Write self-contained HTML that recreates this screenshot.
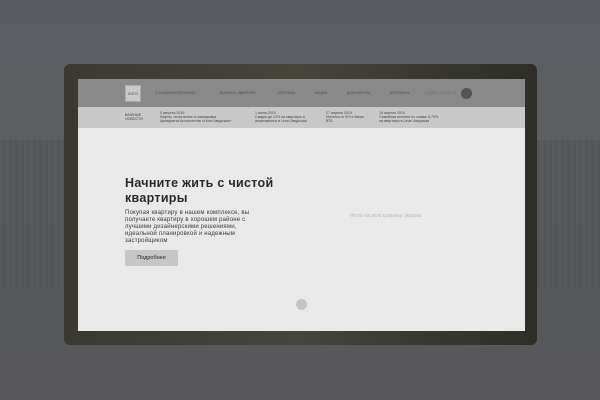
<!DOCTYPE html><html><head><meta charset="utf-8"><style>
*{margin:0;padding:0;box-sizing:border-box}
body{width:600px;height:400px;overflow:hidden;font-family:"Liberation Sans","DejaVu Sans",sans-serif;position:relative;
background:linear-gradient(180deg,#5a5d62 0%,#5d5f62 40%,#56585a 70%,#58585a 100%)}
.bld{position:absolute;left:0;top:140px;width:600px;height:150px;background:repeating-linear-gradient(90deg,#57595b 0 3px,#525456 3px 6px);opacity:.8}
.ground{position:absolute;left:0;top:365px;width:600px;height:35px;background:#58585a}
.frame{position:absolute;left:64px;top:64px;width:473px;height:281px;border-radius:6px;background:linear-gradient(90deg,#3a3a32,#45453c 50%,#2e2d28)}
.scr{position:absolute;left:78px;top:79px;width:447px;height:252px;background:#e9e9e9;overflow:hidden}
.nav{position:absolute;left:0;top:0;width:100%;height:28px;background:#898989}
.news{position:absolute;left:0;top:28px;width:100%;height:21px;background:#c8c8c8}
.t{position:absolute;font-size:3.6px;color:#444;white-space:nowrap;line-height:4.2px}
.n{color:#505050;top:12px}
</style></head><body>
<div class="bld"></div><div class="ground"></div>
<div class="frame"></div>
<div class="scr">
<div class="nav">
<div style="position:absolute;left:47px;top:6px;width:16px;height:17px;background:#c8c8c8;border:1px solid #aaa"></div>
<div class="t" style="left:50px;top:13px">ЛОГО</div>
<div class="t n" style="left:77px">О НАШЕМ КОМПЛЕКСЕ</div>
<div class="t n" style="left:142px">ВЫБРАТЬ КВАРТИРУ</div>
<div class="t n" style="left:200px">ИПОТЕКА</div>
<div class="t n" style="left:237px">АКЦИИ</div>
<div class="t n" style="left:269px">ДОКУМЕНТЫ</div>
<div class="t n" style="left:312px">КОНТАКТЫ</div>
<div class="t n" style="left:347px;color:#6a6a6a">+7 (927) 240-04-25</div>
<div style="position:absolute;left:383px;top:9px;width:11px;height:11px;border-radius:50%;background:#555"></div>
</div>
<div class="news">
<div class="t" style="left:47px;top:6px">ВАЖНЫЕ<br>НОВОСТИ</div>
<div class="t" style="left:82px;top:4px">5 августа 2019<br>Лифты, остекление и планировка<br>Ареафанта Ассистентов «Level Амурская»</div>
<div class="t" style="left:177px;top:4px">1 июля 2019<br>Скидки до 12% на квартиры и<br>апартаменты в Level Амурская</div>
<div class="t" style="left:248px;top:4px">27 апреля 2019<br>Ипотека от 5% в банке<br>ВТБ</div>
<div class="t" style="left:301px;top:4px">19 апреля 2019<br>Семейная ипотека по ставке 5,70%<br>на квартиры в Level Амурская</div>
</div>
<div style="position:absolute;left:47px;top:97px;font-size:12.5px;font-weight:bold;color:#2a2a2a;line-height:15px;width:170px;letter-spacing:.3px">Начните жить с чистой квартиры</div>
<div style="position:absolute;left:47px;top:131px;font-size:6px;color:#3a3a3a;line-height:7px;width:132px;letter-spacing:.2px">Покупая квартиру в нашем комплексе, вы получаете квартиру в хорошем районе с лучшими дизайнерскими решениями, идеальной планировкой и надежным застройщиком</div>
<div style="position:absolute;left:47px;top:171px;width:53px;height:16px;background:#c6c6c6;border-radius:1px;font-size:5.5px;color:#222;text-align:center;line-height:16px">Подробнее</div>
<div style="position:absolute;left:272px;top:134px;font-size:5.5px;color:#b8b8b8">Фото на всю ширину экрана</div>
<div style="position:absolute;left:218px;top:220px;width:11px;height:11px;border-radius:50%;background:#c4c4c4"></div>
</div>
</body></html>
